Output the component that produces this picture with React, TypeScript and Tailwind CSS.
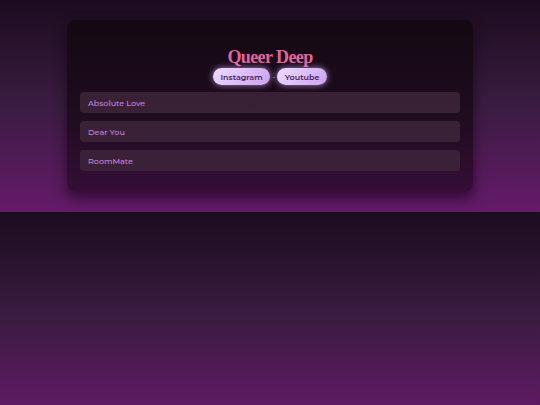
// App.tsx
const songs = ["Absolute Love", "Dear You", "RoomMate"];

const pill =
	"rounded-full px-[7.5px] h-[17px] flex items-center text-[8px] font-semibold text-[#471c58] bg-[linear-gradient(135deg,#efdcff,#c9a2f0)] shadow-[0_0_6px_rgba(214,170,255,0.75)]";

export default function App() {
	return (
		<div
			className="min-h-screen w-full bg-[linear-gradient(180deg,#1b0c1f_0%,#3b1c41_50%,#651a6a_100%)] bg-[length:100%_212px] bg-repeat-y"
			style={{ fontFamily: "Montserrat, 'Open Sans', 'Liberation Sans', sans-serif" }}
		>
			<div className="pt-5 pb-[21px] flex justify-center">
				<div className="w-[406px] rounded-lg bg-[linear-gradient(180deg,#130912_0%,#1f0c1e_55%,#350d37_100%)] shadow-[0_6px_14px_rgba(10,0,12,0.55)] pt-[27px] px-[13px] pb-[21px]">
					{/* Заголовок */}
					<h1
						className="text-center text-[18px] leading-[20px] font-bold text-[#e2649e]"
						style={{ fontFamily: "'Liberation Serif', 'DejaVu Serif', serif", letterSpacing: "-0.6px" }}
					>
						Queer Deep
					</h1>

					{/* Ссылки */}
					<div className="flex justify-center items-center gap-[1px] mt-[1px]">
						<span className={pill}>Instagram</span>
						<span className="text-[8px] text-[#b08ab8] px-[1px]">-</span>
						<span className={pill}>Youtube</span>
					</div>

					{/* Список */}
					<div className="mt-[7px] flex flex-col gap-[8px]">
						{songs.map((s) => (
							<div
								key={s}
								className="h-[21px] rounded-[4px] bg-[#3c2439]/90 flex items-center px-[8px] text-[8px] font-medium text-[#c884e2]"
							>
								{s}
							</div>
						))}
					</div>
				</div>
			</div>
		</div>
	);
}
